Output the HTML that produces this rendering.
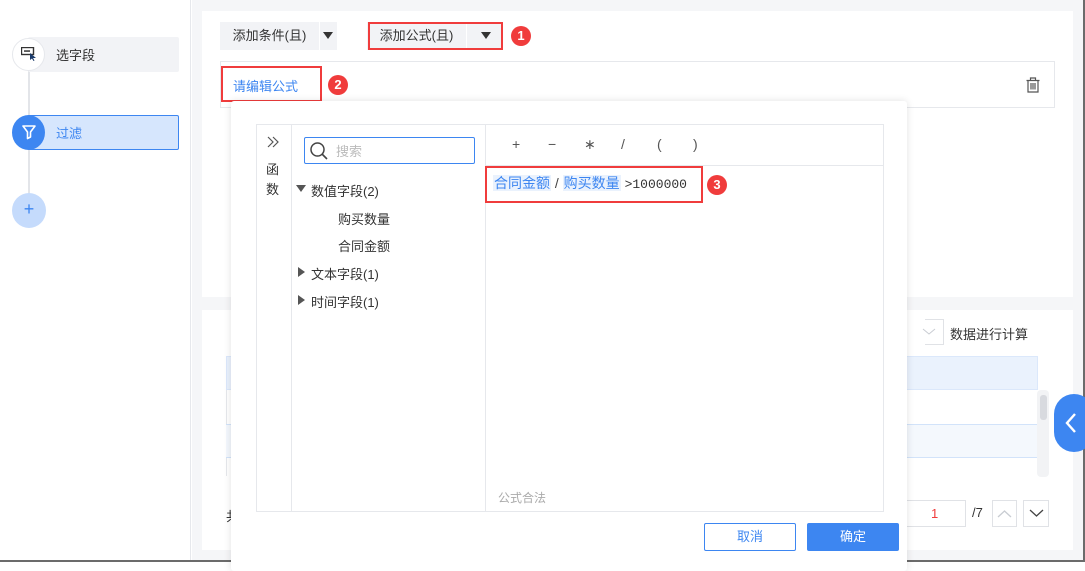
<!DOCTYPE html>
<html><head><meta charset="utf-8">
<style>
*{box-sizing:border-box;margin:0;padding:0}
body{width:1085px;height:562px;position:relative;overflow:hidden;background:#fff;font-family:"Liberation Sans","Noto Sans CJK SC",sans-serif;font-size:13px;color:#333}
.a{position:absolute}
.red{border:2px solid #f03c3c}
.num{width:20px;height:20px;border-radius:50%;background:#f03c3c;color:#fff;font-size:13px;font-weight:bold;text-align:center;line-height:20px}
</style></head><body>
<div class="a" style="left:0;top:0;width:191px;height:562px;background:#fff;border-right:1px solid #e6e8ec"></div>
<div class="a" style="left:28px;top:55px;width:2px;height:160px;background:#e3e5e9"></div>
<div class="a" style="left:28px;top:37px;width:151px;height:35px;background:#f2f3f6;border-radius:2px"></div>
<div class="a" style="left:12px;top:38px;width:33px;height:33px;border-radius:50%;background:#fff;border:1px solid #e6e8ec"></div>
<svg class="a" style="left:21px;top:47px" width="16" height="14" viewBox="0 0 16 14"><rect x="0.5" y="0.5" width="12" height="7" fill="none" stroke="#333" stroke-width="1.4"/><rect x="3" y="3.3" width="6" height="1.5" fill="#333"/><path d="M9 6 L15 11 L12 11 L13.5 13.5 L12.5 14 L11 11.5 L9 13Z" fill="#1a3a6a"/></svg>
<div class="a" style="left:56px;top:45px;font-size:13px;color:#333">选字段</div>
<div class="a" style="left:28px;top:115px;width:151px;height:35px;background:#d6e6fd;border:1px solid #3d86f1;border-radius:2px"></div>
<div class="a" style="left:12px;top:115px;width:33px;height:35px;border-radius:50%;background:#3d86f1"></div>
<svg class="a" style="left:21px;top:124px" width="16" height="16" viewBox="0 0 16 16"><path d="M2 2 H14 L9.5 8 V13 L6.5 14.5 V8 Z" fill="none" stroke="#fff" stroke-width="1.6" stroke-linejoin="round"/></svg>
<div class="a" style="left:56px;top:123px;font-size:13px;color:#3d86f1">过滤</div>
<div class="a" style="left:12px;top:193px;width:34px;height:35px;border-radius:50%;background:#c5dbfc;color:#3d86f1;text-align:center;line-height:33px;font-size:18px">+</div>
<div class="a" style="left:192px;top:0;width:891px;height:561px;background:#f5f6f8"></div>
<div class="a" style="left:1083px;top:0;width:2px;height:562px;background:#6b6b6b"></div>
<div class="a" style="left:0;top:560px;width:1085px;height:2px;background:#6b6b6b"></div>
<div class="a" style="left:202px;top:11px;width:871px;height:286px;background:#fff"></div>
<div class="a" style="left:202px;top:310px;width:871px;height:240px;background:#fff"></div>
<div class="a" style="left:220px;top:22px;width:99px;height:28px;background:#f2f3f6;text-align:center;line-height:28px">添加条件(且)</div>
<div class="a" style="left:320px;top:22px;width:17px;height:28px;background:#f2f3f6"></div>
<div class="a" style="left:323px;top:32px;border-left:5px solid transparent;border-right:5px solid transparent;border-top:7px solid #333"></div>
<div class="a" style="left:367px;top:22px;width:99px;height:28px;background:#f2f3f6;text-align:center;line-height:28px">添加公式(且)</div>
<div class="a" style="left:467px;top:22px;width:34px;height:28px;background:#f2f3f6"></div>
<div class="a" style="left:481px;top:32px;border-left:5px solid transparent;border-right:5px solid transparent;border-top:7px solid #333"></div>
<div class="a red" style="left:368px;top:22px;width:135px;height:28px"></div>
<div class="a num" style="left:511px;top:26px">1</div>
<div class="a" style="left:220px;top:61px;width:835px;height:47px;border:1px solid #e6e8ec"></div>
<div class="a" style="left:233px;top:76px;color:#3d86f1">请编辑公式</div>
<div class="a red" style="left:221px;top:66px;width:101px;height:36px"></div>
<div class="a num" style="left:328px;top:75px">2</div>
<svg class="a" style="left:1026px;top:77px" width="14" height="16" viewBox="0 0 14 16"><path d="M0.5 3.5 H13.5 M4.5 3.5 V1 H9.5 V3.5 M2 3.5 V15 H12 V3.5 M5 6 V12.5 M7 6 V12.5 M9 6 V12.5" fill="none" stroke="#555" stroke-width="1.2"/></svg>
<div class="a" style="left:925px;top:319px;width:19px;height:26px;border:1px solid #e0e2e6;border-left:none"></div>
<svg class="a" style="left:922px;top:328px" width="14" height="8"><path d="M1 1 L7 6 L13 1" fill="none" stroke="#c8ccd2"/></svg>
<div class="a" style="left:950px;top:324px">数据进行计算</div>
<div class="a" style="left:226px;top:356px;width:812px;height:34px;background:#eaf2fd;border:1px solid #dbe8fb"></div>
<div class="a" style="left:226px;top:390px;width:1px;height:86px;background:#e6e8ec"></div>
<div class="a" style="left:226px;top:424px;width:812px;height:34px;background:#f4f8fd;border-top:1px solid #d2e3fa;border-bottom:1px solid #d2e3fa"></div>
<div class="a" style="left:1037px;top:390px;width:12px;height:87px;background:#f2f3f5;border-radius:4px"></div>
<div class="a" style="left:1040px;top:395px;width:7px;height:25px;background:#d8dadf;border-radius:3px"></div>
<div class="a" style="left:1054px;top:394px;width:40px;height:58px;border-radius:29px;background:#3d86f1"></div>
<svg class="a" style="left:1064px;top:412px" width="14" height="22"><path d="M11 2 L3 11 L11 20" fill="none" stroke="#fff" stroke-width="2.4"/></svg>
<div class="a" style="left:226px;top:506px">共</div>
<div class="a" style="left:906px;top:500px;width:60px;height:27px;border:1px solid #e0e2e6;padding-left:24px;line-height:25px;color:#f03c3c">1</div>
<div class="a" style="left:972px;top:505px">/7</div>
<div class="a" style="left:992px;top:500px;width:25px;height:27px;border:1px solid #e0e2e6"></div>
<svg class="a" style="left:997px;top:509px" width="15" height="9"><path d="M1 8 L7.5 2 L14 8" fill="none" stroke="#c8ccd2" stroke-width="1.3"/></svg>
<div class="a" style="left:1023px;top:500px;width:26px;height:27px;border:1px solid #e0e2e6"></div>
<svg class="a" style="left:1029px;top:509px" width="15" height="9"><path d="M1 1 L7.5 7 L14 1" fill="none" stroke="#444" stroke-width="1.3"/></svg>
<div class="a" style="left:231px;top:101px;width:676px;height:470px;background:#fff;border-radius:3px;box-shadow:0 0 8px rgba(0,0,0,0.12)"></div>
<div class="a" style="left:256px;top:124px;width:628px;height:388px;border:1px solid #e6e8ec"></div>
<div class="a" style="left:291px;top:124px;width:1px;height:388px;background:#e6e8ec"></div>
<div class="a" style="left:485px;top:124px;width:1px;height:388px;background:#e6e8ec"></div>
<div class="a" style="left:486px;top:165px;width:398px;height:1px;background:#e6e8ec"></div>
<svg class="a" style="left:266px;top:136px" width="14" height="12"><path d="M2 1 L7 6 L2 11 M7 1 L12 6 L7 11" fill="none" stroke="#555" stroke-width="1.2"/></svg>
<div class="a" style="left:266px;top:160px;width:14px;line-height:20px;font-size:13px;color:#333">函数</div>
<div class="a" style="left:304px;top:137px;width:171px;height:27px;border:1px solid #3d86f1;border-radius:2px"></div>
<svg class="a" style="left:309px;top:141px" width="20" height="20"><circle cx="8.5" cy="8.5" r="6.5" fill="none" stroke="#444" stroke-width="1.5"/><path d="M13 13 L18 18" stroke="#444" stroke-width="1.6"/></svg>
<div class="a" style="left:336px;top:141px;color:#bbb">搜索</div>
<div class="a" style="left:296px;top:185px;border-left:5px solid transparent;border-right:5px solid transparent;border-top:7px solid #555"></div>
<div class="a" style="left:311px;top:181px">数值字段(2)</div>
<div class="a" style="left:338px;top:209px">购买数量</div>
<div class="a" style="left:338px;top:236px">合同金额</div>
<div class="a" style="left:298px;top:267px;border-top:5px solid transparent;border-bottom:5px solid transparent;border-left:7px solid #555"></div>
<div class="a" style="left:311px;top:264px">文本字段(1)</div>
<div class="a" style="left:298px;top:295px;border-top:5px solid transparent;border-bottom:5px solid transparent;border-left:7px solid #555"></div>
<div class="a" style="left:311px;top:292px">时间字段(1)</div>
<div class="a" style="left:512px;top:136px;font-size:14px;color:#555"><span class="a" style="left:0">+</span><span class="a" style="left:36px">−</span><span class="a" style="left:72px">∗</span><span class="a" style="left:109px">/</span><span class="a" style="left:145px">(</span><span class="a" style="left:181px">)</span></div>
<div class="a" style="left:493px;top:173px;white-space:nowrap;font-size:14px"><span style="background:#eaf2fd;color:#3d86f1;padding:0 1px">合同金额</span> <span style="color:#444">/</span> <span style="background:#eaf2fd;color:#3d86f1;padding:0 1px">购买数量</span> <span style="font-family:'Liberation Mono',monospace;font-size:13px;color:#333">&gt;1000000</span></div>
<div class="a red" style="left:485px;top:166px;width:218px;height:37px"></div>
<div class="a num" style="left:707px;top:175px">3</div>
<div class="a" style="left:498px;top:489px;color:#aaa;font-size:12px">公式合法</div>
<div class="a" style="left:704px;top:523px;width:92px;height:28px;border:1px solid #3d86f1;border-radius:2px;color:#3d86f1;text-align:center;line-height:26px">取消</div>
<div class="a" style="left:807px;top:523px;width:92px;height:28px;background:#3d86f1;border-radius:2px;color:#fff;text-align:center;line-height:28px">确定</div>
</body></html>
